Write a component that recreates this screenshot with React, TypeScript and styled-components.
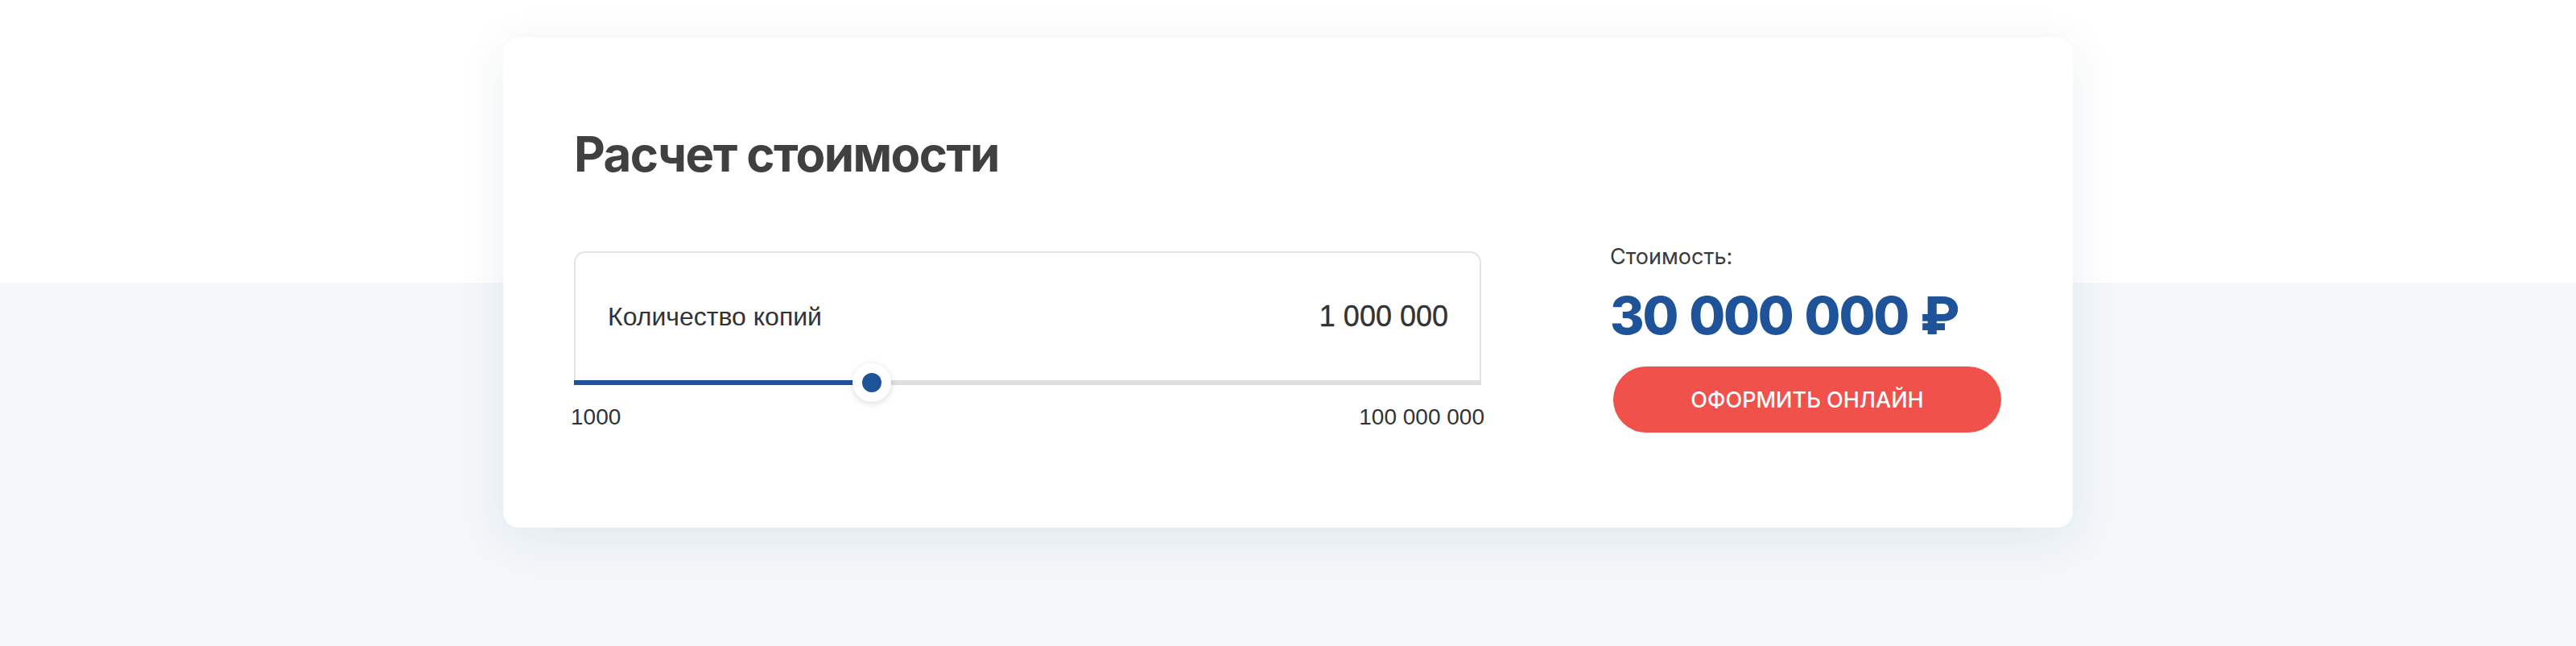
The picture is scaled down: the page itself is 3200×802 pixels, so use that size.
import * as React from 'react';
import styled, { createGlobalStyle } from 'styled-components';

const GlobalStyle = createGlobalStyle`
  body {
    margin: 0;
    font-family: Inter, "Noto Sans", sans-serif;
  }
`

const Page = styled.div`
  min-height: 802px;
  padding-top: 47px;
  box-sizing: border-box;
  display: flex;
  justify-content: center;
  background: linear-gradient(to bottom, #ffffff 0, #ffffff 351px, #f3f7fa 351px);
`

const Card = styled.div`
  width: 1950px;
  height: 608px;
  box-sizing: border-box;
  padding: 108px 89px 0 88px;
  background: #fff;
  border-radius: 20px;
  box-shadow: 0 12px 60px rgba(30, 50, 80, 0.08);
`

const Title = styled.h2`
  margin: 0;
  font-family: Inter, "Noto Sans", sans-serif;
  font-size: 60px;
  line-height: 72px;
  font-weight: 700;
  color: #404040;
  letter-spacing: -1.6px;
`

const Body = styled.div`
  display: flex;
  align-items: flex-start;
  justify-content: space-between;
  margin-top: 75px;
`

const SliderColumn = styled.div`
  width: 1127px;
  padding-top: 10px;
`

const InputBox = styled.div`
  height: 160px;
  box-sizing: border-box;
  padding: 0 39px 0 40px;
  display: flex;
  align-items: center;
  justify-content: space-between;
  border: 2px solid #e3e3e3;
  border-bottom: none;
  border-radius: 14px 14px 0 0;
  font-family: "Liberation Sans", Arial, sans-serif;
  color: #333;
`

const InputLabel = styled.span`
  font-size: 32px;
`

const InputValue = styled.span`
  font-size: 36px;
  -webkit-text-stroke: 0.4px #333;
`

const Track = styled.div`
  position: relative;
  height: 6px;
  background: #dedede;
`

const Fill = styled.div`
  height: 100%;
  background: #1e5399;
`

const Thumb = styled.div`
  position: absolute;
  top: 50%;
  width: 48px;
  height: 48px;
  margin: -24px 0 0 -24px;
  border-radius: 50%;
  background: #fff;
  box-shadow: 0 2px 8px rgba(0, 0, 0, 0.14);
  display: flex;
  align-items: center;
  justify-content: center;

  &::after {
    content: '';
    width: 24px;
    height: 24px;
    border-radius: 50%;
    background: #1e5399;
  }
`

const Scale = styled.div`
  display: flex;
  justify-content: space-between;
  margin: 24px -4px 0 -4px;
  font-family: "Liberation Sans", Arial, sans-serif;
  font-size: 28px;
  line-height: 32px;
  color: #333;
`

const PriceColumn = styled.div`
  width: 486px;
  display: flex;
  flex-direction: column;
  align-items: flex-start;
`

const PriceLabel = styled.div`
  font-size: 27px;
  line-height: 34px;
  color: #3a3a3a;
`

const Price = styled.div`
  margin-top: 16px;
  font-size: 65px;
  line-height: 80px;
  font-weight: 800;
  color: #1e5399;
  letter-spacing: -2.2px;
  word-spacing: 3px;
`

const OrderButton = styled.button`
  margin-top: 23px;
  margin-left: 4px;
  width: 482px;
  height: 82px;
  border: none;
  border-radius: 41px;
  background: #f0514a;
  color: #fff;
  font-family: Inter, "Noto Sans", sans-serif;
  font-size: 27px;
  font-weight: 500;
  text-transform: uppercase;
  cursor: pointer;
`

const MIN = 1000
const MAX = 100000000
const copies = 1000000
const pricePerCopy = 30
// position of the handle as drawn in the original widget
const handlePosition = 0.328

const format = (n: number) => n.toLocaleString('ru-RU').replace(/\s/g, ' ')

const App: React.FC = () => (
  <>
    <GlobalStyle />
    <Page>
      <Card>
        <Title>Расчет стоимости</Title>
        <Body>
          <SliderColumn>
            <InputBox>
              <InputLabel>Количество копий</InputLabel>
              <InputValue>{format(copies)}</InputValue>
            </InputBox>
            <Track>
              <Fill style={{ width: `${handlePosition * 100}%` }} />
              <Thumb style={{ left: `${handlePosition * 100}%` }} />
            </Track>
            <Scale>
              <span>{MIN}</span>
              <span>{format(MAX)}</span>
            </Scale>
          </SliderColumn>
          <PriceColumn>
            <PriceLabel>Стоимость:</PriceLabel>
            <Price>{format(copies * pricePerCopy)} ₽</Price>
            <OrderButton>Оформить онлайн</OrderButton>
          </PriceColumn>
        </Body>
      </Card>
    </Page>
  </>
)

export default App
